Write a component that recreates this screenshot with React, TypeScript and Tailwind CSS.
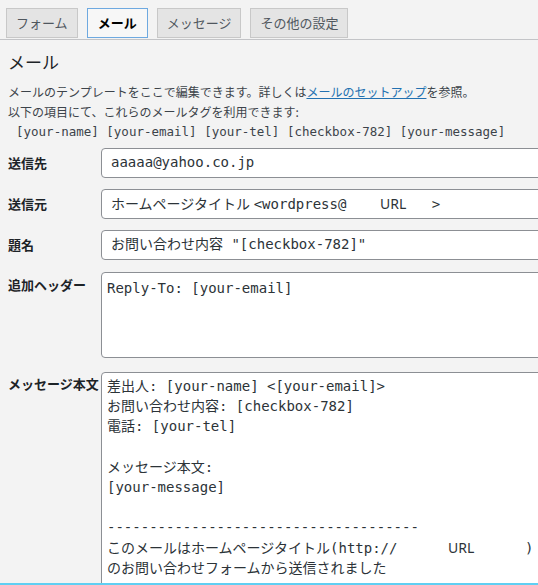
import React from 'react';

const tabs = [
  { label: 'フォーム', active: false },
  { label: 'メール', active: true },
  { label: 'メッセージ', active: false },
  { label: 'その他の設定', active: false },
];

const mono = "font-['DejaVu_Sans_Mono','Noto_Sans_CJK_JP',monospace]";
const sans = "font-['Noto_Sans',sans-serif]";

const Field: React.FC<{ label: string; children: React.ReactNode }> = ({ label, children }) => (
  <div className="flex items-center">
    <div className="w-[93px] shrink-0 text-[13px] font-bold leading-[20px]">{label}</div>
    <div
      className={`h-[30px] w-[470px] shrink-0 rounded-[4px] border border-[#8c8f94] bg-white px-[9px] text-[14px] leading-[27px] whitespace-pre text-[#2c3338] ${mono}`}
    >
      {children}
    </div>
  </div>
);

export default function App() {
  return (
    <div className="h-[585px] overflow-hidden border-b-2 border-[#5fcff3] bg-[#f3f3f3] font-['Noto_Sans_CJK_JP','Noto_Sans',sans-serif] text-[#1d2327]">
      <div className="flex gap-[9px] border-b border-[#c3c4c7] px-[6px] pt-2 pb-px">
        {tabs.map((t) => (
          <div
            key={t.label}
            className={
              t.active
                ? 'flex h-[30px] items-center border border-[#6ea9e0] bg-[#f7f7f7] px-[10px] text-[13px] font-bold text-black'
                : 'flex h-[30px] items-center border border-[#c8c8c8] bg-[#e4e4e4] px-[9px] text-[13px] text-[#50575e]'
            }
          >
            {t.label}
          </div>
        ))}
      </div>

      <div className="pl-2">
        <h2 className="mt-[10px] text-[17px] font-normal leading-[24px]">メール</h2>
        <p className="mt-2 text-[12px] leading-[20px] text-[#3c434a]">
          メールのテンプレートをここで編集できます。詳しくは
          <a href="#" className="text-[#2271b1] underline">
            メールのセットアップ
          </a>
          を参照。
        </p>
        <p className="text-[12px] leading-[20px] text-[#3c434a]">以下の項目にて、これらのメールタグを利用できます:</p>
        <p className={`ml-2 text-[12.5px] leading-[19px] whitespace-pre text-[#3c434a] ${mono}`}>
          [your-name] [your-email] [your-tel] [checkbox-782] [your-message]
        </p>

        <div className="mt-[7px] flex flex-col gap-[11px]">
          <Field label="送信先">aaaaa@yahoo.co.jp</Field>
          <Field label="送信元">
            {'ホームページタイトル'}
            <span className={sans}> </span>
            {'<wordpress@    '}
            <span className={sans}>URL</span>
            {'   >'}
          </Field>
          <Field label="題名">{'お問い合わせ内容 "[checkbox-782]"'}</Field>
        </div>

        <div className="mt-3 flex items-start">
          <div className="w-[93px] shrink-0 pt-[3px] text-[13px] font-bold leading-[20px]">追加ヘッダー</div>
          <div
            className={`h-[86px] w-[470px] shrink-0 rounded-[4px] border border-[#8c8f94] bg-white px-[5px] pt-[5px] text-[14px] leading-[20px] text-[#2c3338] ${mono}`}
          >
            Reply-To: [your-email]
          </div>
        </div>

        <div className="mt-[14px] flex items-start">
          <div className="w-[93px] shrink-0 pt-[2px] text-[13px] font-bold leading-[20px]">メッセージ本文</div>
          <div
            className={`h-[260px] w-[470px] shrink-0 rounded-[4px] border border-[#8c8f94] bg-white px-[5px] pt-[3px] text-[14px] leading-[20.2px] whitespace-pre text-[#2c3338] ${mono}`}
          >
            {'差出人: [your-name] <[your-email]>\n'}
            {'お問い合わせ内容: [checkbox-782]\n'}
            {'電話: [your-tel]\n'}
            {'\n'}
            {'メッセージ本文:\n'}
            {'[your-message]\n'}
            {'\n'}
            {'-------------------------------------\n'}
            {'このメールはホームページタイトル(http://      '}
            <span className={sans}>URL</span>
            {'      )\n'}
            {'のお問い合わせフォームから送信されました'}
          </div>
        </div>
      </div>
    </div>
  );
}
